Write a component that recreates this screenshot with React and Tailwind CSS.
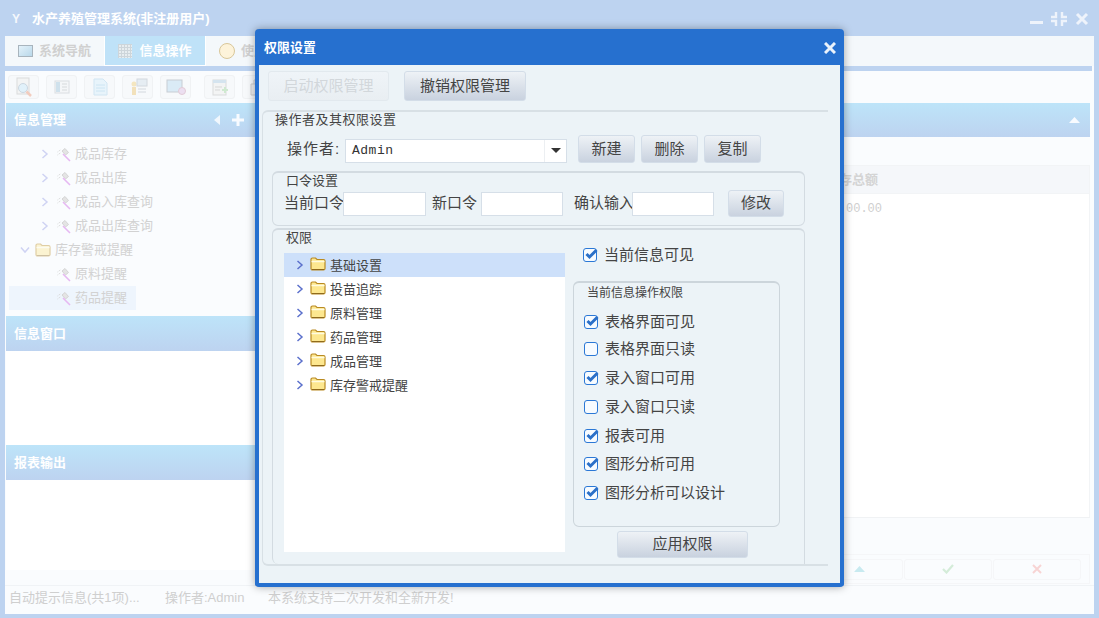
import React from 'react'

const btnClass =
  'flex shrink-0 items-center justify-center rounded-[3px] border border-[#d3dde8] bg-gradient-to-b from-[#eef2f6] to-[#c9d2df] text-[15px] text-[#444]'

function Chevron({ faint, down }) {
  return (
    <svg width="8" height="10" viewBox="0 0 8 10" fill="none" className={down ? 'rotate-90' : ''}>
      <path d="M1.5 1L6 5L1.5 9" stroke={faint ? '#cfd3f3' : '#5b70cc'} strokeWidth="1.5" />
    </svg>
  )
}

function Folder({ faint }) {
  return (
    <svg width="16" height="14" viewBox="0 0 16 14" fill="none" className={faint ? 'opacity-40' : ''}>
      <path d="M1 11.5V2.5C1 1.6 1.6 1 2.5 1H5.5L7 2.5H13.5C14.4 2.5 15 3.1 15 4V11.5C15 12.4 14.4 13 13.5 13H2.5C1.6 13 1 12.4 1 11.5Z" fill="#fde78f" stroke="#b98a22" strokeWidth="1.2" />
      <path d="M1.5 4.5H14.5" stroke="#fffbe0" strokeWidth="1.5" />
      <path d="M2 12.5H14" stroke="#8f6a1c" strokeWidth="1" />
    </svg>
  )
}

function Tool() {
  return (
    <svg width="15" height="15" viewBox="0 0 15 15" fill="none" className="shrink-0">
      <path d="M9 1.5L12.5 5.5L9.5 8L6 4Z" fill="#e4e4e4" stroke="#d5d5d5" />
      <path d="M1.5 5L5 2.5" stroke="#d8d8d8" strokeDasharray="1 1" />
      <path d="M1.5 8L5 5.5" stroke="#d8d8d8" strokeDasharray="1 1" />
      <path d="M7 7L14 14" stroke="#e6b8f2" strokeWidth="1.6" />
    </svg>
  )
}

function Check({ on }) {
  return (
    <span className="relative block h-[14px] w-[14px] shrink-0 rounded-[3px] border-[1.5px] border-[#2b78d6] bg-[#f7fbff]">
      {on && (
        <svg width="15" height="13" viewBox="0 0 15 13" fill="none" className="absolute left-[0px] top-[-1px]">
          <path d="M2.5 6L5.5 9L12.5 2" stroke="#2b70c8" strokeWidth="3" />
        </svg>
      )}
    </span>
  )
}

function CheckRow({ on, label, className }) {
  return (
    <div className={`flex h-[20px] items-center gap-[7px] whitespace-nowrap text-[15px] text-[#444] ${className}`}>
      <Check on={on} />
      <span>{label}</span>
    </div>
  )
}

function PanelHead({ title, children, height = 'h-[35px]' }) {
  return (
    <div className={`flex shrink-0 items-center justify-between bg-gradient-to-b from-[#bde4f9] to-[#bdd3f0] pl-[8px] pr-[10px] text-[13px] font-bold text-white ${height}`}>
      <span>{title}</span>
      {children}
    </div>
  )
}

function SideRow({ label, chevron, selected }) {
  return (
    <div className={`flex h-[24px] w-[127px] items-center text-[13px] text-[#d2d2d2] ${selected ? 'bg-[#eef5fd]' : ''}`}>
      <span className="ml-[32px] flex w-[15px] shrink-0 items-center">{chevron && <Chevron faint />}</span>
      <Tool />
      <span className="ml-[4px] whitespace-nowrap">{label}</span>
    </div>
  )
}

const toolIcons = [
  <svg key="a" width="22" height="22" viewBox="0 0 22 22" fill="none">
    <rect x="4" y="2" width="12" height="16" fill="#f2f2f2" stroke="#cfcfcf" />
    <circle cx="10" cy="12" r="4.5" fill="#d8eefa" stroke="#b9c9d6" />
    <path d="M13.5 15.5L18 20" stroke="#f0b9a5" strokeWidth="2.5" />
  </svg>,
  <svg key="b" width="22" height="22" viewBox="0 0 22 22" fill="none">
    <rect x="4" y="5" width="14" height="12" fill="#f3f5f7" stroke="#d0d4d8" />
    <rect x="5" y="6" width="4" height="10" fill="#bfd8e6" />
    <path d="M11 8H16M11 11H16M11 14H16" stroke="#c9cdd1" />
  </svg>,
  <svg key="c" width="22" height="22" viewBox="0 0 22 22" fill="none">
    <path d="M5 3H14L18 7V19H5Z" fill="#e3f3fc" stroke="#c3dff0" />
    <path d="M7 9H16M7 12H16M7 15H16" stroke="#bcdcf0" />
  </svg>,
  <svg key="d" width="22" height="22" viewBox="0 0 22 22" fill="none">
    <circle cx="7" cy="8" r="2.5" fill="#f4dfa8" />
    <rect x="5" y="11" width="4" height="8" fill="#f0d8a0" />
    <rect x="10" y="3" width="10" height="7" fill="#dfe8f0" stroke="#c5ccd4" />
    <path d="M11 13H19M11 16H19" stroke="#c5ccd4" />
  </svg>,
  <svg key="e" width="22" height="22" viewBox="0 0 22 22" fill="none">
    <rect x="2" y="4" width="15" height="12" fill="#cfe6f5" stroke="#b5bcc4" />
    <circle cx="17" cy="15" r="3.5" fill="#e8d5ee" stroke="#d9b8c8" />
  </svg>,
  <svg key="f" width="22" height="22" viewBox="0 0 22 22" fill="none">
    <rect x="4" y="4" width="13" height="15" fill="#f2f2f2" stroke="#cfcfcf" />
    <rect x="4" y="4" width="13" height="3" fill="#c7dcea" />
    <path d="M6 11H13M6 14H11" stroke="#c9c9c9" />
    <path d="M16 11V17M13 14H19" stroke="#bfe3bf" strokeWidth="2" />
  </svg>,
  <svg key="g" width="22" height="22" viewBox="0 0 22 22" fill="none">
    <path d="M4 8H18V19H4Z" fill="#ececec" stroke="#bdbdbd" />
    <path d="M7 8V4H15V8" stroke="#bdbdbd" />
  </svg>,
]

function Background() {
  return (
    <div className="flex h-full flex-col">
      <div className="flex h-[36px] shrink-0 items-center pl-[12px] pr-[10px] pt-[1px] text-[13px] font-bold text-white">
        <span className="w-[20px] text-[12px] font-bold text-[#f5f8fc]">Y</span>
        <span>水产养殖管理系统(非注册用户)</span>
        <div className="ml-auto flex items-center gap-[8px]">
          <svg width="14" height="14" viewBox="0 0 14 14"><rect x="1" y="9" width="13" height="3" fill="#eef3fb" /></svg>
          <svg width="16" height="14" viewBox="0 0 16 14" fill="none" stroke="#eef3fb" strokeWidth="2.4">
            <path d="M5 0V5H0M11 0V5H16M5 14V9H0M11 14V9H16" />
          </svg>
          <svg width="14" height="14" viewBox="0 0 14 14" fill="none" stroke="#eef3fb" strokeWidth="3">
            <path d="M2 2L12 12M12 2L2 12" />
          </svg>
        </div>
      </div>

      <div className="mx-[5px] mb-[4px] flex min-h-0 flex-1 flex-col bg-[#fafcfe]">
        {/* tabs */}
        <div className="flex h-[30px] shrink-0 bg-[#f4f8fb] text-[13px] font-bold text-[#d0d0d0]">
          <div className="flex w-[100px] items-center justify-center gap-[6px] border-r border-white">
            <span className="h-[12px] w-[15px] border border-[#a8b4bd] bg-gradient-to-br from-[#e4f2fa] to-[#b9d8ea]" />
            <span>系统导航</span>
          </div>
          <div className="flex w-[100px] items-center justify-center gap-[7px] border-b border-white bg-[#bfe2f8] text-white">
            <span className="h-[14px] w-[14px] bg-[#e7edf0] [background-image:linear-gradient(#cdd5da_1px,transparent_1px),linear-gradient(90deg,#cdd5da_1px,transparent_1px)] [background-size:3px_3px]" />
            <span>信息操作</span>
          </div>
          <div className="flex w-[60px] items-center gap-[6px] whitespace-nowrap border-l border-white pl-[13px]">
            <span className="h-[16px] w-[16px] shrink-0 rounded-full border border-[#d9c79a] bg-[#fdf3da]" />
            <span>使用</span>
          </div>
        </div>
        <div className="mr-[2px] h-[5px] shrink-0 bg-[#bdd3f0]" />

        {/* toolbar */}
        <div className="flex h-[32px] shrink-0 items-center gap-[7px] pl-[3px]">
          {toolIcons.map((icon, i) => (
            <div key={i} className={`flex h-[24px] w-[31px] items-center justify-center rounded-[3px] border border-[#f0f2f4] bg-[#f7f9fb] ${i === 5 ? 'ml-[6px]' : ''}`}>
              <span className="opacity-70">{icon}</span>
            </div>
          ))}
        </div>

        <div className="flex min-h-0 flex-1 pl-[1px] pr-[4px]">
          {/* left column */}
          <div className="flex w-[255px] shrink-0 flex-col">
            <PanelHead title="信息管理" height="h-[34px]">
              <div className="flex items-center gap-[11px] pr-[7px]">
                <svg width="7" height="10" viewBox="0 0 7 10"><path d="M6 0V10L0 5Z" fill="#f1f7fd" /></svg>
                <svg width="12" height="12" viewBox="0 0 12 12"><path d="M4.5 0H7.5V4.5H12V7.5H7.5V12H4.5V7.5H0V4.5H4.5Z" fill="#f8fbff" /></svg>
              </div>
            </PanelHead>
            <div className="h-[179px] shrink-0 pl-[3px] pt-[5px]">
              <SideRow label="成品库存" chevron />
              <SideRow label="成品出库" chevron />
              <SideRow label="成品入库查询" chevron />
              <SideRow label="成品出库查询" chevron />
              <div className="flex h-[24px] items-center text-[13px] text-[#d2d2d2]">
                <span className="ml-[12px] flex w-[14px] items-center"><Chevron faint down /></span>
                <Folder faint />
                <span className="ml-[4px]">库存警戒提醒</span>
              </div>
              <SideRow label="原料提醒" />
              <SideRow label="药品提醒" selected />
            </div>
            <PanelHead title="信息窗口" />
            <div className="h-[94px] shrink-0 bg-white" />
            <PanelHead title="报表输出" />
            <div className="flex-1 bg-white" />
            <div className="h-[15px] shrink-0" />
          </div>

          {/* main column */}
          <div className="ml-[5px] flex min-w-0 flex-1 flex-col">
            <PanelHead title="" height="h-[34px]">
              <svg width="11" height="6" viewBox="0 0 11 6"><path d="M5.5 0L11 6H0Z" fill="#f8fbff" /></svg>
            </PanelHead>
            <div className="mt-[28px] flex h-[29px] shrink-0 items-center justify-end border border-[#f2f4f6] bg-[#f5f7fa] pr-[211px] text-[13px] font-bold text-[#d4d4d4]">
              库存总额
            </div>
            <div className="h-[323px] shrink-0 border-x border-[#f2f4f6] bg-white pl-[579px] pt-[6px] font-['Liberation_Mono',monospace] text-[12px] text-[#cfcfcf]">
              00.00
            </div>
            <div className="flex flex-1 flex-col justify-end border-t border-[#f0f2f4] pb-[1px]">
              <div className="flex h-[30px] items-center justify-end gap-[1px] border border-[#f5f6f8] pr-[8px]">
                <div className="flex h-[21px] w-[88px] items-center justify-center rounded-[3px] border border-[#f5f6f8]">
                  <svg width="11" height="6" viewBox="0 0 11 6"><path d="M5.5 0L11 6H0Z" fill="#c8eaf0" /></svg>
                </div>
                <div className="flex h-[21px] w-[88px] items-center justify-center rounded-[3px] border border-[#f5f6f8]">
                  <svg width="12" height="10" viewBox="0 0 12 10" fill="none"><path d="M1 5L4.5 8.5L11 1" stroke="#d4ecd9" strokeWidth="2.2" /></svg>
                </div>
                <div className="flex h-[21px] w-[88px] items-center justify-center rounded-[3px] border border-[#f5f6f8]">
                  <svg width="10" height="10" viewBox="0 0 10 10" fill="none"><path d="M1 1L9 9M9 1L1 9" stroke="#f7d4d4" strokeWidth="2" /></svg>
                </div>
              </div>
            </div>
          </div>
        </div>

        {/* status bar */}
        <div className="flex h-[29px] shrink-0 items-center whitespace-nowrap border-t border-[#f0f3f6] pb-[5px] pl-[4px] text-[13px] text-[#cfcfcf]">
          <span className="w-[156px]">自动提示信息(共1项)...</span>
          <span className="w-[103px]">操作者:Admin</span>
          <span>本系统支持二次开发和全新开发!</span>
        </div>
      </div>
    </div>
  )
}

function Dialog() {
  return (
    <div className="absolute left-[255px] top-[29px] flex h-[558px] w-[589px] flex-col rounded-[4px] border-x-4 border-b-4 border-[#2670cf] bg-[#ecf3f7] shadow-[0_0_8px_rgba(0,0,0,0.35)]">
      <div className="flex h-[36px] shrink-0 items-center justify-between bg-[#2670cf] pl-[5px] pr-[4px] pt-[2px] text-[13px] font-bold text-white">
        <span>权限设置</span>
        <svg width="12" height="12" viewBox="0 0 12 12" fill="none" stroke="#eaf2fb" strokeWidth="3">
          <path d="M1 1L11 11M11 1L1 11" />
        </svg>
      </div>

      <div className="flex gap-[15px] pl-[9px] pt-[6px]">
        <div className="flex h-[30px] w-[121px] items-center justify-center rounded-[3px] border border-[#e2e9ee] bg-gradient-to-b from-[#eff4f8] to-[#e9eef2] text-[15px] text-[#d2d7db]">
          启动权限管理
        </div>
        <div className={`${btnClass} h-[30px] w-[122px]`}>撤销权限管理</div>
      </div>

      {/* group 操作者 */}
      <div className="ml-[3px] mr-[12px] mt-[9px] flex min-h-0 flex-1 flex-col rounded-bl-[6px] rounded-tl-[6px] border-y-2 border-l border-[#d8e0e5]">
        <div className="pl-[12px] text-[13px] leading-[16px] tracking-[0.5px] text-[#444]">操作者及其权限设置</div>

        <div className="mt-[7px] flex items-center pl-[24px]">
          <span className="w-[58px] whitespace-nowrap text-[15px] tracking-[1px] text-[#444]">操作者:</span>
          <div className="mt-[3px] flex h-[24px] w-[222px] items-center border border-[#d6dfe8] bg-white pl-[6px] font-['Liberation_Mono',monospace] text-[13px] tracking-[0.5px] text-[#333]">
            Admin
            <span className="ml-auto flex h-full w-[22px] items-center justify-center border-l border-[#eceff2]">
              <svg width="10" height="5" viewBox="0 0 10 5"><path d="M0 0H10L5 5Z" fill="#333" /></svg>
            </span>
          </div>
          <div className="ml-[11px] flex gap-[6px]">
            <div className={`${btnClass} h-[28px] w-[57px]`}>新建</div>
            <div className={`${btnClass} h-[28px] w-[57px]`}>删除</div>
            <div className={`${btnClass} h-[28px] w-[57px]`}>复制</div>
          </div>
        </div>

        {/* group 口令 */}
        <div className="ml-[9px] mt-[8px] h-[55px] w-[533px] shrink-0 rounded-[6px] border border-t-2 border-[#d3dbe1] pl-[11px]">
          <div className="pl-[2px] text-[13px] leading-[15px] text-[#444]">口令设置</div>
          <div className="mt-[2px] flex items-center whitespace-nowrap text-[15px] text-[#444]">
            <span className="w-[59px] shrink-0">当前口令</span>
            <span className="h-[24px] w-[83px] shrink-0 border border-[#d6dfe8] bg-white" />
            <span className="ml-[6px] w-[49px] shrink-0">新口令</span>
            <span className="h-[24px] w-[82px] shrink-0 border border-[#d6dfe8] bg-white" />
            <span className="ml-[11px] w-[58px] shrink-0">确认输入</span>
            <span className="h-[24px] w-[82px] shrink-0 border border-[#d6dfe8] bg-white" />
            <div className={`${btnClass} ml-[14px] h-[27px] w-[56px]`}>修改</div>
          </div>
        </div>

        {/* group 权限 */}
        <div className="ml-[9px] mt-[2px] flex min-h-0 w-[533px] flex-1 flex-col rounded-bl-[6px] rounded-t-[6px] border-x border-t-2 border-[#d3dbe1] pl-[11px]">
          <div className="pl-[2px] text-[13px] leading-[15px] text-[#444]">权限</div>
          <div className="mt-[8px] flex">
            <div className="h-[299px] w-[281px] shrink-0 bg-white">
              {['基础设置', '投苗追踪', '原料管理', '药品管理', '成品管理', '库存警戒提醒'].map((label, i) => (
                <div key={label} className={`flex h-[24px] items-center pl-[12px] text-[13px] text-[#444] ${i === 0 ? 'bg-[#cde0fa]' : ''}`}>
                  <Chevron />
                  <span className="-mt-[3px] ml-[6px]"><Folder /></span>
                  <span className="ml-[4px] mt-[1px]">{label}</span>
                </div>
              ))}
            </div>
            <div className="ml-[8px] flex flex-col">
              <CheckRow on label="当前信息可见" className="-mt-[8px] ml-[10px]" />
              <div className="mt-[16px] h-[246px] w-[207px] rounded-[6px] border border-t-2 border-[#ccd5db] pl-[10px] pt-[2px]">
                <div className="pl-[3px] text-[12px] leading-[16px] text-[#444]">当前信息操作权限</div>
                <CheckRow on label="表格界面可见" className="mt-[11px]" />
                <CheckRow label="表格界面只读" className="mt-[7px]" />
                <CheckRow on label="录入窗口可用" className="mt-[9px]" />
                <CheckRow label="录入窗口只读" className="mt-[9px]" />
                <CheckRow on label="报表可用" className="mt-[9px]" />
                <CheckRow on label="图形分析可用" className="mt-[8px]" />
                <CheckRow on label="图形分析可以设计" className="mt-[9px]" />
              </div>
              <div className={`${btnClass} ml-[44px] mt-[4px] h-[27px] w-[131px]`}>应用权限</div>
            </div>
          </div>
        </div>
      </div>
      <div className="h-[17px] shrink-0" />
    </div>
  )
}

export default function App() {
  return (
    <div className="relative h-[618px] w-[1099px] overflow-hidden bg-[#bdd3f0] font-['Liberation_Sans','Noto_Sans_CJK_SC',sans-serif]">
      <Background />
      <Dialog />
    </div>
  )
}
